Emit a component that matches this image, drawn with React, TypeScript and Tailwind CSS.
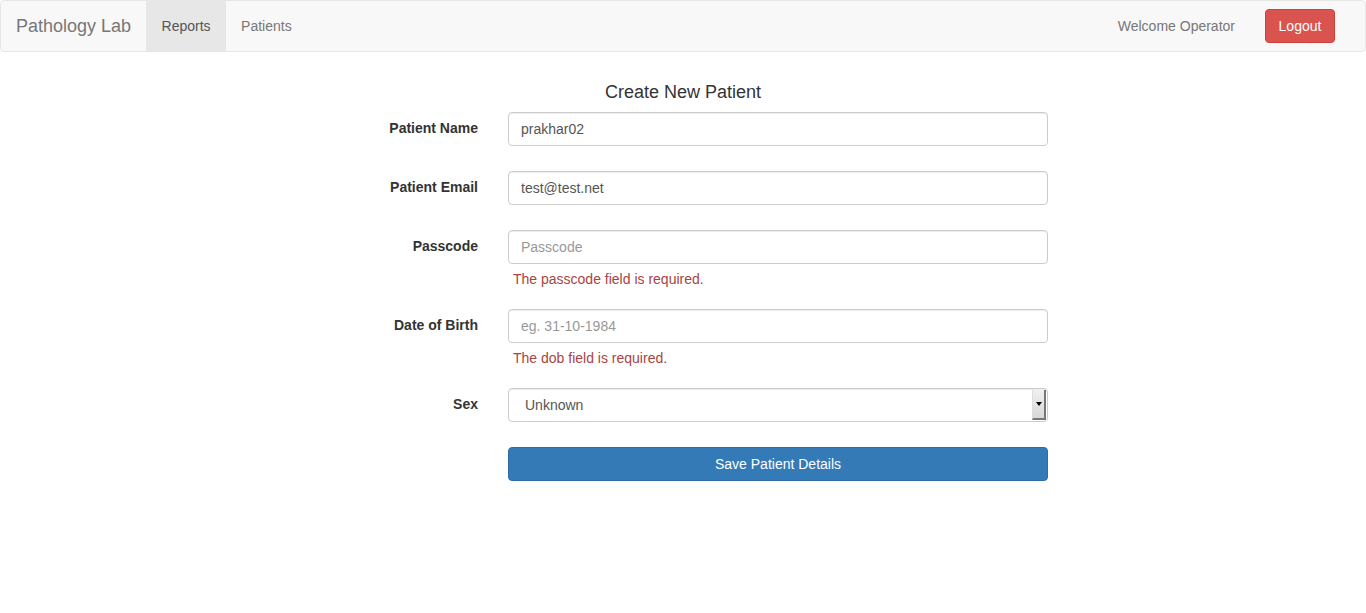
import React from "react";

const font = { fontFamily: '"Liberation Sans", Arial, sans-serif' };

function Row({
  label,
  children,
  error,
}: {
  label: string;
  children: React.ReactNode;
  error?: string;
}) {
  return (
    <div className="flex mb-[25px]">
      <div className="w-[478px] shrink-0 text-right pt-[6px] text-[14px] leading-[20px] font-bold text-[#333]">
        {label}
      </div>
      <div className="ml-[30px] w-[540px]">
        {children}
        {error && (
          <div className="mt-[5px] -mb-[5px] pl-[5px] text-[14px] leading-[20px] text-[#a94442]">
            {error}
          </div>
        )}
      </div>
    </div>
  );
}

function Input({ value, placeholder }: { value?: string; placeholder?: string }) {
  return (
    <input
      readOnly
      value={value ?? ""}
      placeholder={placeholder}
      className="block w-full h-[34px] px-[12px] py-[6px] text-[14px] leading-[20px] text-[#555] bg-white border border-[#ccc] rounded-[4px] shadow-[inset_0_1px_1px_rgba(0,0,0,0.075)] outline-none placeholder:text-[#999]"
      style={font}
    />
  );
}

export default function App() {
  return (
    <div className="min-h-[613px] bg-white text-[14px] text-[#333]" style={font}>
      <nav className="h-[52px] bg-[#f8f8f8] border border-[#e7e7e7] rounded-[4px] flex items-stretch">
        <div className="px-[15px] text-[18px] leading-[20px] py-[15px] text-[#777]">Pathology Lab</div>
        <div className="w-[80px] text-center py-[15px] leading-[20px] bg-[#e7e7e7] text-[#555]">Reports</div>
        <div className="px-[15px] py-[15px] leading-[20px] text-[#777]">Patients</div>
        <div className="flex-1" />
        <div className="px-[15px] py-[15px] leading-[20px] text-[#777]">Welcome Operator</div>
        <div className="ml-[15px] mr-[30px] flex items-center">
          <button
            className="w-[70px] h-[34px] text-[14px] leading-[20px] text-white bg-[#d9534f] border border-[#d43f3a] rounded-[4px]"
            style={font}
          >
            Logout
          </button>
        </div>
      </nav>

      <div className="pt-[30px]">
        <div className="text-center text-[18px] leading-[20px] text-[#333] mb-[10px]">Create New Patient</div>

        <Row label="Patient Name">
          <Input value="prakhar02" />
        </Row>
        <Row label="Patient Email">
          <Input value="test@test.net" />
        </Row>
        <Row label="Passcode" error="The passcode field is required.">
          <Input placeholder="Passcode" />
        </Row>
        <Row label="Date of Birth" error="The dob field is required.">
          <Input placeholder="eg. 31-10-1984" />
        </Row>
        <Row label="Sex">
          <div className="relative h-[34px] w-full bg-white border border-[#ccc] rounded-[4px] shadow-[inset_0_1px_1px_rgba(0,0,0,0.075)]">
            <div className="absolute left-[16px] top-[6px] text-[14px] leading-[20px] text-[#555]">Unknown</div>
            <div className="absolute right-[1px] top-[1px] bottom-[1px] w-[14px] bg-gradient-to-b from-[#f0f0f0] to-[#d8d8d8] border-r-2 border-b-2 border-[#777] border-l border-l-[#ddd] flex items-center justify-center">
              <div className="w-0 h-0 border-l-[3px] border-r-[3px] border-t-[4px] border-l-transparent border-r-transparent border-t-black" />
            </div>
          </div>
        </Row>
        <div className="flex">
          <div className="ml-[508px] w-[540px]">
            <button
              className="w-full h-[34px] text-[14px] leading-[20px] text-white bg-[#337ab7] border border-[#2e6da4] rounded-[4px]"
              style={font}
            >
              Save Patient Details
            </button>
          </div>
        </div>
      </div>
    </div>
  );
}
